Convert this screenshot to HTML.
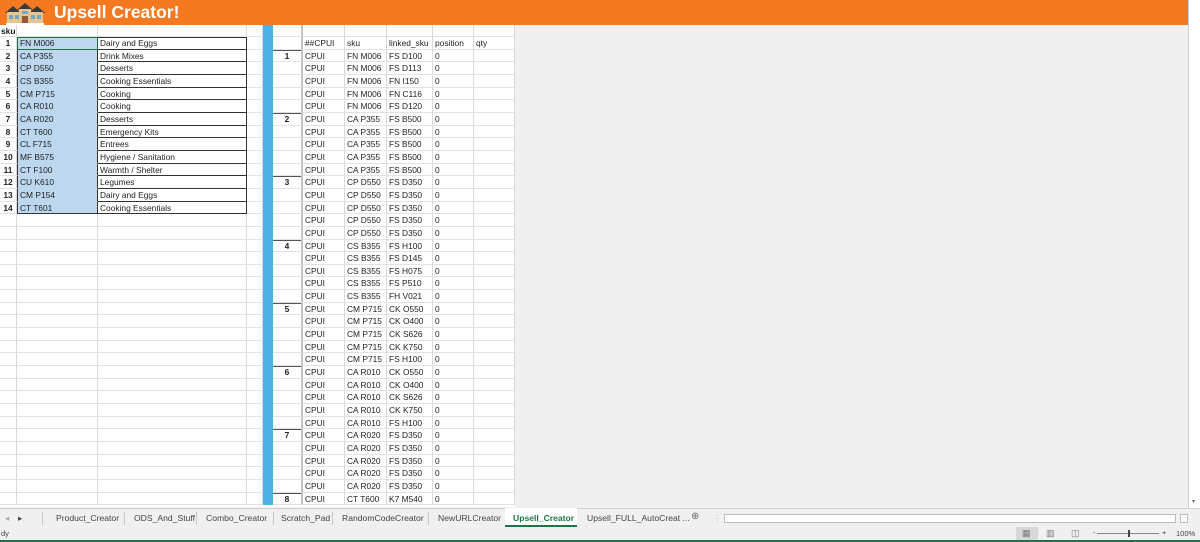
<!DOCTYPE html>
<html><head><meta charset="utf-8"><style>
*{margin:0;padding:0;box-sizing:border-box}
body{width:1200px;height:542px;overflow:hidden;background:#f0f0f0;font-family:"Liberation Sans",sans-serif;font-size:8.4px;color:#222;position:relative}
#hdr{position:absolute;left:0;top:0;width:1188px;height:25px;background:#f47920}
#hdr .t{position:absolute;left:54px;top:2px;color:#fff;font-weight:bold;font-size:17.5px;letter-spacing:0}
#vs{position:absolute;left:1188px;top:0;width:12px;height:508px;background:#fff;border-left:1px solid #d0d0d0}
#sheet{position:absolute;left:0;top:25px;width:515px;height:482px;background:#fff}
.r{display:flex;height:12.67px;line-height:12px;white-space:nowrap}
.r.h0{height:12px}
.r>i{font-style:normal;display:block;height:100%;border-right:1px solid #dadada;border-bottom:1px solid #e2e2e2;padding-left:2px;overflow:hidden}
.r>i:nth-child(1){width:17px;text-align:center;font-weight:bold;padding:0}
.r>i:nth-child(2){width:81px}
.r>i:nth-child(3){width:149px}
.r>i:nth-child(4){width:16px}
.r>i:nth-child(5){width:10px;background:#4cb1e5;border:none}
.r>i:nth-child(6){width:30px;text-align:center;font-weight:bold;border-right:2px solid #c4c4c4;padding:0}
.r>i:nth-child(7){width:42px}
.r>i:nth-child(8){width:42px}
.r>i:nth-child(9){width:46px}
.r>i:nth-child(10){width:41px}
.r>i:nth-child(11){width:41px}
.L>i:nth-child(2){background:#bdd7ee;border-right:1px solid #333;border-left:1px solid #333;border-bottom-color:#bdd7ee}
.L>i:nth-child(3){border-right:1px solid #333;border-bottom:1px solid #333}
.L.first>i:nth-child(2),.L.first>i:nth-child(3){box-shadow:inset 0 1px 0 #333}
.L.last>i:nth-child(2){border-bottom:1px solid #333}
.L.first>i:nth-child(2){outline:1.5px solid #217346;outline-offset:-1.5px}
.G>i:nth-child(6){box-shadow:inset 0 1px 0 #555}
#tabs{position:absolute;left:0;top:508px;width:1200px;height:19px;background:#f0f0f0;border-top:1px solid #d0d0d0;font-size:8.6px;color:#444}
#tabs span{position:absolute;top:4px}
#tabs .sep{position:absolute;top:3px;width:1px;height:13px;background:#c8c8c8}
#status{position:absolute;left:0;top:527px;width:1200px;height:13px;background:#f0f0f0;font-size:7.5px;color:#444}
#green{position:absolute;left:0;top:540px;width:1200px;height:2px;background:#217346}
</style></head><body>
<div id="hdr">
<svg width="44" height="24" viewBox="0 0 44 24" style="position:absolute;left:3px;top:1px">
<polygon points="2,12 10,5 18,12" fill="#3a3a3a"/>
<polygon points="14,9 22,2 30,9" fill="#3a3a3a"/>
<polygon points="26,12 34,5 42,12" fill="#3a3a3a"/>
<rect x="4" y="11" width="36" height="12" fill="#e8c590"/>
<rect x="16" y="8" width="12" height="6" fill="#e8c590"/>
<rect x="6" y="14" width="4" height="4" fill="#6fa8c8"/>
<rect x="12" y="14" width="4" height="4" fill="#6fa8c8"/>
<rect x="19" y="10" width="6" height="3" fill="#6fa8c8"/>
<rect x="19" y="15" width="6" height="8" fill="#8a5a3a"/>
<rect x="28" y="14" width="4" height="4" fill="#6fa8c8"/>
<rect x="34" y="14" width="4" height="4" fill="#6fa8c8"/>
<rect x="3" y="22" width="38" height="2" fill="#fff"/>
</svg>
<div class="t">Upsell Creator!</div></div>
<div id="vs"><div style="position:absolute;left:3px;top:498px;font-size:6px;color:#666">▾</div></div>
<div id="sheet">
<div class="r h0"><i style="font-weight:bold;text-align:left;padding-left:1px">sku</i><i></i><i></i><i></i><i></i><i></i><i></i><i></i><i></i><i></i><i></i></div>
<div class="r L first"><i>1</i><i>FN M006</i><i>Dairy and Eggs</i><i></i><i></i><i></i><i>##CPUI</i><i>sku</i><i>linked_sku</i><i>position</i><i>qty</i></div>
<div class="r L G"><i>2</i><i>CA P355</i><i>Drink Mixes</i><i></i><i></i><i>1</i><i>CPUI</i><i>FN M006</i><i>FS D100</i><i>0</i><i></i></div>
<div class="r L"><i>3</i><i>CP D550</i><i>Desserts</i><i></i><i></i><i></i><i>CPUI</i><i>FN M006</i><i>FS D113</i><i>0</i><i></i></div>
<div class="r L"><i>4</i><i>CS B355</i><i>Cooking Essentials</i><i></i><i></i><i></i><i>CPUI</i><i>FN M006</i><i>FN I150</i><i>0</i><i></i></div>
<div class="r L"><i>5</i><i>CM P715</i><i>Cooking</i><i></i><i></i><i></i><i>CPUI</i><i>FN M006</i><i>FN C116</i><i>0</i><i></i></div>
<div class="r L"><i>6</i><i>CA R010</i><i>Cooking</i><i></i><i></i><i></i><i>CPUI</i><i>FN M006</i><i>FS D120</i><i>0</i><i></i></div>
<div class="r L G"><i>7</i><i>CA R020</i><i>Desserts</i><i></i><i></i><i>2</i><i>CPUI</i><i>CA P355</i><i>FS B500</i><i>0</i><i></i></div>
<div class="r L"><i>8</i><i>CT T600</i><i>Emergency Kits</i><i></i><i></i><i></i><i>CPUI</i><i>CA P355</i><i>FS B500</i><i>0</i><i></i></div>
<div class="r L"><i>9</i><i>CL F715</i><i>Entrees</i><i></i><i></i><i></i><i>CPUI</i><i>CA P355</i><i>FS B500</i><i>0</i><i></i></div>
<div class="r L"><i>10</i><i>MF B575</i><i>Hygiene / Sanitation</i><i></i><i></i><i></i><i>CPUI</i><i>CA P355</i><i>FS B500</i><i>0</i><i></i></div>
<div class="r L"><i>11</i><i>CT F100</i><i>Warmth / Shelter</i><i></i><i></i><i></i><i>CPUI</i><i>CA P355</i><i>FS B500</i><i>0</i><i></i></div>
<div class="r L G"><i>12</i><i>CU K610</i><i>Legumes</i><i></i><i></i><i>3</i><i>CPUI</i><i>CP D550</i><i>FS D350</i><i>0</i><i></i></div>
<div class="r L"><i>13</i><i>CM P154</i><i>Dairy and Eggs</i><i></i><i></i><i></i><i>CPUI</i><i>CP D550</i><i>FS D350</i><i>0</i><i></i></div>
<div class="r L last"><i>14</i><i>CT T601</i><i>Cooking Essentials</i><i></i><i></i><i></i><i>CPUI</i><i>CP D550</i><i>FS D350</i><i>0</i><i></i></div>
<div class="r"><i></i><i></i><i></i><i></i><i></i><i></i><i>CPUI</i><i>CP D550</i><i>FS D350</i><i>0</i><i></i></div>
<div class="r"><i></i><i></i><i></i><i></i><i></i><i></i><i>CPUI</i><i>CP D550</i><i>FS D350</i><i>0</i><i></i></div>
<div class="r G"><i></i><i></i><i></i><i></i><i></i><i>4</i><i>CPUI</i><i>CS B355</i><i>FS H100</i><i>0</i><i></i></div>
<div class="r"><i></i><i></i><i></i><i></i><i></i><i></i><i>CPUI</i><i>CS B355</i><i>FS D145</i><i>0</i><i></i></div>
<div class="r"><i></i><i></i><i></i><i></i><i></i><i></i><i>CPUI</i><i>CS B355</i><i>FS H075</i><i>0</i><i></i></div>
<div class="r"><i></i><i></i><i></i><i></i><i></i><i></i><i>CPUI</i><i>CS B355</i><i>FS P510</i><i>0</i><i></i></div>
<div class="r"><i></i><i></i><i></i><i></i><i></i><i></i><i>CPUI</i><i>CS B355</i><i>FH V021</i><i>0</i><i></i></div>
<div class="r G"><i></i><i></i><i></i><i></i><i></i><i>5</i><i>CPUI</i><i>CM P715</i><i>CK O550</i><i>0</i><i></i></div>
<div class="r"><i></i><i></i><i></i><i></i><i></i><i></i><i>CPUI</i><i>CM P715</i><i>CK O400</i><i>0</i><i></i></div>
<div class="r"><i></i><i></i><i></i><i></i><i></i><i></i><i>CPUI</i><i>CM P715</i><i>CK S626</i><i>0</i><i></i></div>
<div class="r"><i></i><i></i><i></i><i></i><i></i><i></i><i>CPUI</i><i>CM P715</i><i>CK K750</i><i>0</i><i></i></div>
<div class="r"><i></i><i></i><i></i><i></i><i></i><i></i><i>CPUI</i><i>CM P715</i><i>FS H100</i><i>0</i><i></i></div>
<div class="r G"><i></i><i></i><i></i><i></i><i></i><i>6</i><i>CPUI</i><i>CA R010</i><i>CK O550</i><i>0</i><i></i></div>
<div class="r"><i></i><i></i><i></i><i></i><i></i><i></i><i>CPUI</i><i>CA R010</i><i>CK O400</i><i>0</i><i></i></div>
<div class="r"><i></i><i></i><i></i><i></i><i></i><i></i><i>CPUI</i><i>CA R010</i><i>CK S626</i><i>0</i><i></i></div>
<div class="r"><i></i><i></i><i></i><i></i><i></i><i></i><i>CPUI</i><i>CA R010</i><i>CK K750</i><i>0</i><i></i></div>
<div class="r"><i></i><i></i><i></i><i></i><i></i><i></i><i>CPUI</i><i>CA R010</i><i>FS H100</i><i>0</i><i></i></div>
<div class="r G"><i></i><i></i><i></i><i></i><i></i><i>7</i><i>CPUI</i><i>CA R020</i><i>FS D350</i><i>0</i><i></i></div>
<div class="r"><i></i><i></i><i></i><i></i><i></i><i></i><i>CPUI</i><i>CA R020</i><i>FS D350</i><i>0</i><i></i></div>
<div class="r"><i></i><i></i><i></i><i></i><i></i><i></i><i>CPUI</i><i>CA R020</i><i>FS D350</i><i>0</i><i></i></div>
<div class="r"><i></i><i></i><i></i><i></i><i></i><i></i><i>CPUI</i><i>CA R020</i><i>FS D350</i><i>0</i><i></i></div>
<div class="r"><i></i><i></i><i></i><i></i><i></i><i></i><i>CPUI</i><i>CA R020</i><i>FS D350</i><i>0</i><i></i></div>
<div class="r G"><i></i><i></i><i></i><i></i><i></i><i>8</i><i>CPUI</i><i>CT T600</i><i>K7 M540</i><i>0</i><i></i></div>
</div>
<div id="tabs">
<span style="left:5px;color:#aaa">◂</span><span style="left:18px">▸</span>
<div class="sep" style="left:42px"></div>
<span style="left:56px">Product_Creator</span>
<div class="sep" style="left:124px"></div>
<span style="left:134px">ODS_And_Stuff</span>
<div class="sep" style="left:196px"></div>
<span style="left:206px">Combo_Creator</span>
<div class="sep" style="left:273px"></div>
<span style="left:281px">Scratch_Pad</span>
<div class="sep" style="left:332px"></div>
<span style="left:342px">RandomCodeCreator</span>
<div class="sep" style="left:428px"></div>
<span style="left:438px">NewURLCreator</span>
<div style="position:absolute;left:505px;top:-1px;width:72px;height:19px;background:#fff;border-bottom:2px solid #217346"></div>
<span style="left:513px;color:#217346;font-weight:bold">Upsell_Creator</span>
<span style="left:587px">Upsell_FULL_AutoCreat ...</span>
<span style="left:691px;top:2px;font-size:10px;color:#666">⊕</span>
<span style="left:713px;color:#bbb">⋮</span>
<div style="position:absolute;left:724px;top:5px;width:452px;height:9px;background:#fff;border:1px solid #bbb"></div>
<div style="position:absolute;left:1180px;top:5px;width:8px;height:9px;background:#fff;border:1px solid #bbb"></div>
</div>
<div id="status"><span style="position:absolute;left:1px;top:2px">dy</span>
<div style="position:absolute;left:1016px;top:0;width:22px;height:13px;background:#d8d8d8"></div>
<span style="position:absolute;left:1022px;top:1px;font-size:9px;color:#777">▦</span>
<span style="position:absolute;left:1046px;top:1px;font-size:9px;color:#777">▥</span>
<span style="position:absolute;left:1071px;top:1px;font-size:9px;color:#777">◫</span>
<div style="position:absolute;left:1097px;top:6px;width:62px;height:1px;background:#888"></div>
<div style="position:absolute;left:1128px;top:3px;width:2px;height:7px;background:#444"></div>
<span style="position:absolute;left:1093px;top:1px">-</span>
<span style="position:absolute;left:1162px;top:1px">+</span>
<span style="position:absolute;left:1176px;top:2px">100%</span>
</div>
<div id="green"></div>
</body></html>
